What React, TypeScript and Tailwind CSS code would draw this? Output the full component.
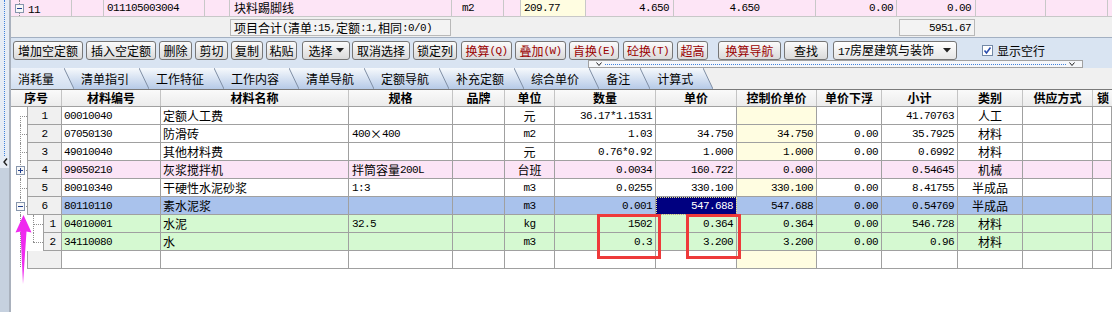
import React from 'react';

// CJK runs get the CJK face at 12px, latin runs a narrow mono face (6px per char like SimSun)
const CJK = /([\u2E80-\u9FFF\uFF00-\uFFEF\u00D7]+)/;

function T({ s }: { s: string }) {
  return (
    <>
      {s
        .split(CJK)
        .filter(Boolean)
        .map((p, i) =>
          CJK.test(p) ? (
            <span key={i} className="text-[12px] leading-[16px] [font-family:'Noto_Sans_CJK_SC',sans-serif]">
              {p}
            </span>
          ) : (
            <span key={i} className="text-[11px] leading-[16px] tracking-[-0.6px] [font-family:'Liberation_Mono',monospace]">
              {p}
            </span>
          )
        )}
    </>
  );
}

type Tone = 'white' | 'pink' | 'blue' | 'green';
type TreeKind = 'first' | 'mid' | 'plus' | 'minus' | 'c1' | 'c2' | 'empty';

type Row = {
  no: string;
  code: string;
  name: string;
  spec: string;
  unit: string;
  qty: string;
  price: string;
  ctrl: string;
  down: string;
  sum: string;
  kind: string;
  tone: Tone;
  tree: TreeKind;
  sel?: boolean;
};

const rows: Row[] = [
  { no: '1', code: '00010040', name: '定额人工费', spec: '', unit: '元', qty: '36.17*1.1531', price: '', ctrl: '', down: '', sum: '41.70763', kind: '人工', tone: 'white', tree: 'first' },
  { no: '2', code: '07050130', name: '防滑砖', spec: '400×400', unit: 'm2', qty: '1.03', price: '34.750', ctrl: '34.750', down: '0.00', sum: '35.7925', kind: '材料', tone: 'white', tree: 'mid' },
  { no: '3', code: '49010040', name: '其他材料费', spec: '', unit: '元', qty: '0.76*0.92', price: '1.000', ctrl: '1.000', down: '0.00', sum: '0.6992', kind: '材料', tone: 'white', tree: 'mid' },
  { no: '4', code: '99050210', name: '灰浆搅拌机', spec: '拌筒容量200L', unit: '台班', qty: '0.0034', price: '160.722', ctrl: '0.000', down: '', sum: '0.54645', kind: '机械', tone: 'pink', tree: 'plus' },
  { no: '5', code: '80010340', name: '干硬性水泥砂浆', spec: '1:3', unit: 'm3', qty: '0.0255', price: '330.100', ctrl: '330.100', down: '0.00', sum: '8.41755', kind: '半成品', tone: 'white', tree: 'mid' },
  { no: '6', code: '80110110', name: '素水泥浆', spec: '', unit: 'm3', qty: '0.001', price: '547.688', ctrl: '547.688', down: '0.00', sum: '0.54769', kind: '半成品', tone: 'blue', tree: 'minus', sel: true },
  { no: '1', code: '04010001', name: '水泥', spec: '32.5', unit: 'kg', qty: '1502', price: '0.364', ctrl: '0.364', down: '0.00', sum: '546.728', kind: '材料', tone: 'green', tree: 'c1' },
  { no: '2', code: '34110080', name: '水', spec: '', unit: 'm3', qty: '0.3', price: '3.200', ctrl: '3.200', down: '0.00', sum: '0.96', kind: '材料', tone: 'green', tree: 'c2' },
  { no: '', code: '', name: '', spec: '', unit: '', qty: '', price: '', ctrl: '', down: '', sum: '', kind: '', tone: 'white', tree: 'empty' },
];

const toneBg: Record<Tone, string> = {
  white: 'bg-white',
  pink: 'bg-[#fbe4f6]',
  blue: 'bg-[#a9c2ec]',
  green: 'bg-[#d5f9d1]',
};

const buttons = [
  { t: '增加空定额', c: 'ml-[2px] w-[70px]' },
  { t: '插入空定额', c: 'ml-[3px] w-[70px]' },
  { t: '删除', c: 'ml-[3px] w-[33px]' },
  { t: '剪切', c: 'ml-[3px] w-[33px]' },
  { t: '复制', c: 'ml-[3px] w-[32px]' },
  { t: '粘贴', c: 'ml-[3px] w-[31px]' },
  { t: '选择', c: 'ml-[5px] w-[48px]', drop: true },
  { t: '取消选择', c: 'ml-[2px] w-[58px]' },
  { t: '锁定列', c: 'ml-[3px] w-[44px]' },
  { t: '换算(Q)', c: 'ml-[4px] w-[51px]', red: true },
  { t: '叠加(W)', c: 'ml-[3px] w-[51px]', red: true },
  { t: '肯换(E)', c: 'ml-[3px] w-[50px]', red: true },
  { t: '砼换(T)', c: 'ml-[4px] w-[50px]', red: true },
  { t: '超高', c: 'ml-[4px] w-[31px]', red: true },
  { t: '换算导航', c: 'ml-[10px] w-[63px]', red: true },
  { t: '查找', c: 'ml-[3px] w-[44px]' },
];

const tabs = ['消耗量', '清单指引', '工作特征', '工作内容', '清单导航', '定额导航', '补充定额', '综合单价', '备注', '计算式'];

function Expander({ plus, cls }: { plus?: boolean; cls: string }) {
  return (
    <svg width="9" height="9" viewBox="0 0 9 9" className={cls}>
      <rect x="0.5" y="0.5" width="8" height="8" fill="#f8f8f8" stroke="#8796ad" />
      <path d="M2 4.5h5" stroke="#1f3e8e" />
      {plus && <path d="M4.5 2v5" stroke="#1f3e8e" />}
    </svg>
  );
}

function Tree({ kind }: { kind: TreeKind }) {
  const dot = 'absolute border-dotted border-[#8f8f8f]';
  if (kind === 'c1' || kind === 'c2') {
    return (
      <div className="relative w-[32px] h-full bg-white">
        <div className={`${dot} left-[9px] top-0 bottom-0 border-l`} />
        <div className={`${dot} left-[22px] top-0 border-l ${kind === 'c1' ? 'bottom-0' : 'h-[9px]'}`} />
        <div className={`${dot} left-[22px] top-[9px] w-[10px] border-t`} />
      </div>
    );
  }
  if (kind === 'empty') {
    return (
      <div className="relative w-[16px] h-full bg-white">
        <div className={`${dot} left-[9px] top-0 h-[16px] border-l`} />
      </div>
    );
  }
  return (
    <div className="relative w-[16px] h-full bg-white">
      <div className={`${dot} left-[9px] bottom-0 border-l ${kind === 'first' ? 'top-[9px]' : 'top-0'}`} />
      <div className={`${dot} left-[9px] top-[9px] w-[7px] border-t`} />
      {kind === 'plus' && <Expander plus cls="absolute left-[5px] top-[5px]" />}
      {kind === 'minus' && <Expander cls="absolute left-[5px] top-[5px]" />}
    </div>
  );
}

function GridRow({ r }: { r: Row }) {
  const bg = toneBg[r.tone];
  const ctrlBg = r.tone === 'white' ? 'bg-[#fffde1]' : bg;
  const cell = 'h-full border-r border-b border-[#a0a0a0] flex items-center overflow-hidden whitespace-nowrap';
  const child = r.tree === 'c1' || r.tree === 'c2';
  return (
    <div className="flex h-[18px]">
      <Tree kind={r.tree} />
      <div className={`${cell} ${child ? 'w-[19px]' : 'w-[35px]'} border-l bg-[#f0f0f0] justify-center`}>
        <T s={r.no} />
      </div>
      <div className={`${cell} ${bg} w-[99px] pl-[2px]`}><T s={r.code} /></div>
      <div className={`${cell} ${bg} w-[188px] pl-[2px]`}><T s={r.name} /></div>
      <div className={`${cell} ${bg} w-[104px] pl-[3px]`}><T s={r.spec} /></div>
      <div className={`${cell} ${bg} w-[52px]`} />
      <div className={`${cell} ${bg} w-[50px] justify-center`}><T s={r.unit} /></div>
      <div className={`${cell} ${bg} w-[101px] justify-end pr-[3px]`}><T s={r.qty} /></div>
      {r.sel ? (
        <div className="h-full w-[81px] border-r border-b border-[#a0a0a0] flex items-center justify-end pr-[3px] bg-[#000080] text-white outline-1 outline-dotted outline-[#e8e890] -outline-offset-1">
          <T s={r.price} />
        </div>
      ) : (
        <div className={`${cell} ${bg} w-[81px] justify-end pr-[3px]`}><T s={r.price} /></div>
      )}
      <div className={`${cell} ${ctrlBg} w-[80px] justify-end pr-[3px]`}><T s={r.ctrl} /></div>
      <div className={`${cell} ${bg} w-[65px] justify-end pr-[3px]`}><T s={r.down} /></div>
      <div className={`${cell} ${bg} w-[76px] justify-end pr-[3px]`}><T s={r.sum} /></div>
      <div className={`${cell} ${bg} w-[65px] justify-center`}><T s={r.kind} /></div>
      <div className={`${cell} ${bg} w-[70px]`} />
      <div className={`${cell} ${bg} flex-1`} />
    </div>
  );
}

function Tab({ label, active, last }: { label: string; active?: boolean; last?: boolean }) {
  return (
    <div className="flex h-[21px]">
      <div
        className={`flex items-center pl-[7px] pr-[10px] bg-linear-to-b ${
          active ? 'from-[#edf2fa] to-[#d2dff0]' : 'from-[#f6f9fc] to-[#b6cae7]'
        }`}
      >
        <T s={label} />
      </div>
      <svg width="10" height="21" viewBox="0 0 10 21" className="block">
        <rect width="10" height="21" fill={last ? '#f0f0f0' : 'url(#tabg)'} />
        <polygon points="0,0 10,21 0,21" fill={active ? 'url(#taba)' : 'url(#tabg)'} />
        <line x1="0" y1="0" x2="10" y2="21" stroke="#7f8ea4" />
      </svg>
    </div>
  );
}

export default function App() {
  const head = 'h-full border-r border-[#c4c4c4] flex items-center justify-center font-bold';
  const topCell = 'h-full border-r border-[#c8c8c8] flex items-center whitespace-nowrap';
  return (
    <div className="relative w-[1112px] h-[312px] overflow-hidden flex bg-white text-black [font-family:'Noto_Sans_CJK_SC',sans-serif] text-[12px]">
      <svg width="0" height="0" className="absolute">
        <defs>
          <linearGradient id="tabg" x1="0" y1="0" x2="0" y2="1">
            <stop offset="0" stopColor="#f6f9fc" />
            <stop offset="1" stopColor="#b6cae7" />
          </linearGradient>
          <linearGradient id="taba" x1="0" y1="0" x2="0" y2="1">
            <stop offset="0" stopColor="#edf2fa" />
            <stop offset="1" stopColor="#d2dff0" />
          </linearGradient>
        </defs>
      </svg>

      {/* left splitter strip */}
      <div className="w-[11px] h-full flex flex-col border-r-2 border-[#a9b1bd]">
        <div className="relative h-[156px] bg-[#e6ecf5]">
          <div className="absolute left-[4px] top-0 bottom-0 border-l border-dotted border-[#3f80dc]" />
        </div>
        <div className="h-[12px] bg-[#e6ecf5] flex items-center pl-[3px]">
          <svg width="5" height="8" viewBox="0 0 5 8">
            <path d="M4 0.5L1 4l3 3.5" stroke="#202020" strokeWidth="1.4" fill="none" />
          </svg>
        </div>
        <div className="flex-1 bg-[#c6d1df]" />
      </div>

      <div className="flex-1 h-full flex flex-col">
        {/* parent bill row */}
        <div className="flex h-[17px] bg-[#fde5f6] border-b border-[#c8c8c8]">
          <div className={`${topCell} relative w-[61px]`}>
            <div className="absolute left-[8px] top-0 bottom-0 border-l border-dotted border-[#8f8f8f]" />
            <Expander cls="absolute left-[4px] top-[4px]" />
            <span className="ml-[17px]"><T s="11" /></span>
          </div>
          <div className={`${topCell} w-[32px]`} />
          <div className={`${topCell} w-[101px] pl-[3px]`}><T s="011105003004" /></div>
          <div className={`${topCell} w-[25px]`} />
          <div className={`${topCell} w-[222px] pl-[4px]`}><T s="块料踢脚线" /></div>
          <div className={`${topCell} w-[52px] pl-[10px]`}><T s="m2" /></div>
          <div className={`${topCell} w-[17px]`} />
          <div className={`${topCell} w-[65px] bg-[#fffde1] justify-end pr-[25px]`}><T s="209.77" /></div>
          <div className={`${topCell} w-[88px] justify-end pr-[4px]`}><T s="4.650" /></div>
          <div className={`${topCell} w-[142px] justify-center`}><T s="4.650" /></div>
          <div className={`${topCell} w-[81px] justify-end pr-[3px]`}><T s="0.00" /></div>
          <div className={`${topCell} w-[79px] justify-end pr-[4px]`}><T s="0.00" /></div>
          <div className={`${topCell} w-[70px]`} />
          <div className={`${topCell} w-[62px]`} />
          <div className="flex-1" />
        </div>

        {/* totals row */}
        <div className="flex h-[20px] bg-[#f0f0f0] pt-[2px]">
          <div className="ml-[219px] w-[221px] h-[17px] border border-[#b8b8b8] bg-[#f3f3f3] flex items-center pl-[3px] whitespace-nowrap">
            <T s="项目合计 (清单:15,定额:1,相同:0/0)" />
          </div>
          <div className="ml-[448px] w-[76px] h-[17px] border border-[#b8b8b8] bg-[#f3f3f3] flex items-center justify-end pr-[3px]">
            <T s="5951.67" />
          </div>
        </div>

        {/* toolbar */}
        <div className="h-[31px] border-t border-[#a3b0c2] bg-[#d9e4f2] flex flex-col">
          <div className="flex items-center h-[19px] mt-[3px]">
            {buttons.map((b) => (
              <div
                key={b.t}
                className={`${b.c} h-[19px] rounded-[3px] border border-[#767676] bg-linear-to-b from-[#fbfbfb] to-[#dadada] flex items-center justify-center whitespace-nowrap ${
                  b.red ? 'text-[#9a0000]' : 'text-black'
                }`}
              >
                <T s={b.t} />
                {b.drop && (
                  <svg width="8" height="5" viewBox="0 0 8 5" className="ml-[3px]">
                    <path d="M0 0h8L4 4.5z" fill="#202020" />
                  </svg>
                )}
              </div>
            ))}
            <div className="ml-[5px] w-[124px] h-[19px] rounded-[3px] border border-[#767676] bg-linear-to-b from-[#ffffff] to-[#e6e6e6] flex items-center justify-between pl-[4px] pr-[5px] whitespace-nowrap">
              <span><T s="17房屋建筑与装饰" /></span>
              <svg width="8" height="5" viewBox="0 0 8 5">
                <path d="M0 0h8L4 4.5z" fill="#202020" />
              </svg>
            </div>
            <svg width="11" height="11" viewBox="0 0 11 11" className="ml-[25px]">
              <rect x="0.5" y="0.5" width="10" height="10" fill="#fff" stroke="#7389a6" />
              <path d="M2.5 5.5l2 2.5 4-5.5" stroke="#2b4eae" strokeWidth="1.6" fill="none" />
            </svg>
            <span className="ml-[4px]"><T s="显示空行" /></span>
          </div>
          <div className="flex h-[8px]">
            <div className="ml-[577px] w-[495px] h-[8px] border border-[#a0a0a0] bg-[#f5f7fa] flex items-center px-[7px]">
              <svg width="6" height="4" viewBox="0 0 6 4">
                <path d="M0.5 0.5L3 3.5 5.5 0.5" stroke="#202020" fill="none" />
              </svg>
              <div className="flex-1 mx-[3px] border-t border-dotted border-[#3f80dc]" />
              <svg width="6" height="4" viewBox="0 0 6 4">
                <path d="M0.5 0.5L3 3.5 5.5 0.5" stroke="#202020" fill="none" />
              </svg>
            </div>
          </div>
        </div>

        {/* tabs */}
        <div className="flex h-[21px] bg-[#f0f0f0]">
          {tabs.map((t, i) => (
            <Tab key={t} label={t} active={i === 0} last={i === tabs.length - 1} />
          ))}
        </div>

        {/* grid */}
        <div className="flex h-[18px] border-t border-b border-t-[#7a7a7a] border-b-[#a0a0a0] bg-linear-to-b from-[#fafafa] to-[#ececec]">
          <div className={`${head} w-[51px]`}><T s="序号" /></div>
          <div className={`${head} w-[99px]`}><T s="材料编号" /></div>
          <div className={`${head} w-[188px]`}><T s="材料名称" /></div>
          <div className={`${head} w-[104px]`}><T s="规格" /></div>
          <div className={`${head} w-[52px]`}><T s="品牌" /></div>
          <div className={`${head} w-[50px]`}><T s="单位" /></div>
          <div className={`${head} w-[101px]`}><T s="数量" /></div>
          <div className={`${head} w-[81px]`}><T s="单价" /></div>
          <div className={`${head} w-[80px]`}><T s="控制价单价" /></div>
          <div className={`${head} w-[65px]`}><T s="单价下浮" /></div>
          <div className={`${head} w-[76px]`}><T s="小计" /></div>
          <div className={`${head} w-[65px]`}><T s="类别" /></div>
          <div className={`${head} w-[70px]`}><T s="供应方式" /></div>
          <div className="h-full flex-1 flex items-center pl-[4px] font-bold"><T s="锁" /></div>
        </div>
        {rows.map((r, i) => (
          <GridRow key={i} r={r} />
        ))}
        <div className="flex-1 bg-white" />
      </div>

      {/* annotations */}
      <svg width="20" height="74" viewBox="0 0 20 74" className="absolute left-[14px] top-[213px]">
        <polygon points="9.5,2 17.5,19.5 12.5,18.5 9,71 6.5,18.5 1.5,19.5" fill="#ef2bef" />
      </svg>
      <div className="absolute left-[597px] top-[214px] w-[64px] h-[45px] border-[3px] border-[#ee3a3a]" />
      <div className="absolute left-[686px] top-[214px] w-[55px] h-[45px] border-[3px] border-[#ee3a3a]" />
    </div>
  );
}
